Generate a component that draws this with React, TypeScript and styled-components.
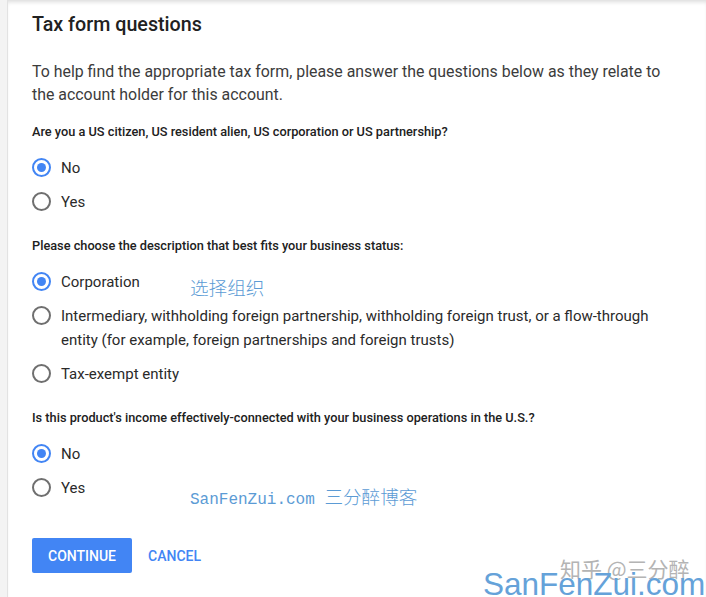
import styled, { createGlobalStyle } from "styled-components";

const GlobalStyle = createGlobalStyle`
    html, body {
        margin: 0;
        padding: 0;
        background: #ffffff;
    }
    body {
        font-family: Roboto, "Noto Sans", "Liberation Sans", sans-serif;
        color: #212121;
    }
`

const StyledPage = styled.div`
    position: relative;
    display: flex;
    width: 706px;
    height: 597px;
    overflow: hidden;
    background: #ffffff;
`

const SideStrip = styled.div`
    width: 7px;
    flex: none;
    background: #f3f3f3;
    border-right: 1px solid #e2e2e2;
`

const Card = styled.main`
    flex: 1;
    padding: 11px 0 0 24px;
    box-shadow: inset 0 4px 4px -2px rgba(0, 0, 0, 0.14);
`

const Title = styled.h2`
    margin: 0 0 21px 0;
    font-size: 19.7px;
    line-height: 28px;
    font-weight: 500;
    color: #212121;
`

const Intro = styled.p`
    margin: 0 0 17px 0;
    font-size: 15.9px;
    line-height: 23px;
    color: #3c3c3c;
    max-width: 650px;
`

const Question = styled.p`
    margin: 0 0 10px 0;
    font-size: 12.75px;
    line-height: 18px;
    font-weight: 500;
    color: #212121;
`

const Group = styled.div`
    display: flex;
    flex-direction: column;
    margin-bottom: 18px;
`

const Row = styled.label`
    display: flex;
    align-items: flex-start;
    gap: 10px;
    padding: 5px 0;
`

const Circle = styled.span<{ $checked?: boolean }>`
    position: relative;
    flex: none;
    box-sizing: border-box;
    width: 19px;
    height: 19px;
    margin-top: 2px;
    border-radius: 50%;
    border: 2px solid ${(p) => (p.$checked ? "#4285f4" : "#6f6f6f")};

    &::after {
        content: "";
        display: ${(p) => (p.$checked ? "block" : "none")};
        position: absolute;
        left: 3px;
        top: 3px;
        width: 9px;
        height: 9px;
        border-radius: 50%;
        background: #4285f4;
    }
`

const Label = styled.span`
    font-size: 15px;
    line-height: 24px;
    color: #2a2a2a;
    max-width: 600px;
`

const Actions = styled.div`
    display: flex;
    align-items: center;
    margin-top: 33px;
`

const Button = styled.button<{ $primary?: boolean }>`
    height: 35px;
    padding: 0 16px;
    border: none;
    border-radius: 2px;
    font-family: Roboto, "Liberation Sans", sans-serif;
    font-size: 14px;
    font-weight: 500;
    background: ${(p) => (p.$primary ? "#4285f4" : "transparent")};
    color: ${(p) => (p.$primary ? "#ffffff" : "#4285f4")};
`

const Mark = styled.div<{ $x: number; $y: number }>`
    position: absolute;
    left: ${(p) => p.$x}px;
    top: ${(p) => p.$y}px;
    color: #5b9bd5;
    white-space: nowrap;
`

const MarkCjk = styled(Mark)`
    font-family: "Noto Sans CJK SC", sans-serif;
    font-size: 18.6px;
    font-weight: 300;
    line-height: 22px;
`

const MarkMono = styled(Mark)`
    font-family: "Liberation Mono", monospace;
    font-size: 16px;
    line-height: 22px;

    span {
        font-family: "Noto Sans CJK SC", sans-serif;
        font-size: 18.6px;
        font-weight: 300;
    }
`

const MarkZhihu = styled(Mark)`
    font-family: "Noto Sans CJK SC", sans-serif;
    font-size: 21px;
    line-height: 26px;
    color: #b4b4b4;
    text-shadow: 0 0 2px #ffffff;
`

const MarkBig = styled(Mark)`
    font-family: "Liberation Sans", Arial, sans-serif;
    font-size: 31.5px;
    line-height: 32px;
    color: #65a2d9;
`

type Option = { text: string; checked?: boolean }

const groups: { question: string; options: Option[] }[] = [
    {
        question: "Are you a US citizen, US resident alien, US corporation or US partnership?",
        options: [{ text: "No", checked: true }, { text: "Yes" }],
    },
    {
        question: "Please choose the description that best fits your business status:",
        options: [
            { text: "Corporation", checked: true },
            { text: "Intermediary, withholding foreign partnership, withholding foreign trust, or a flow-through entity (for example, foreign partnerships and foreign trusts)" },
            { text: "Tax-exempt entity" },
        ],
    },
    {
        question: "Is this product's income effectively-connected with your business operations in the U.S.?",
        options: [{ text: "No", checked: true }, { text: "Yes" }],
    },
]

function App() {
    return (
        <StyledPage>
            <GlobalStyle />
            <SideStrip />
            <Card>
                <Title>Tax form questions</Title>
                <Intro>
                    To help find the appropriate tax form, please answer the questions below as they relate to the account holder for this account.
                </Intro>

                {groups.map((group) => (
                    <div key={group.question}>
                        <Question>{group.question}</Question>
                        <Group>
                            {group.options.map((option) => (
                                <Row key={option.text}>
                                    <Circle $checked={option.checked} />
                                    <Label>{option.text}</Label>
                                </Row>
                            ))}
                        </Group>
                    </div>
                ))}

                <Actions>
                    <Button $primary>CONTINUE</Button>
                    <Button>CANCEL</Button>
                </Actions>
            </Card>

            <MarkCjk $x={190} $y={276}>选择组织</MarkCjk>
            <MarkMono $x={190} $y={485}>SanFenZui.com <span>三分醉博客</span></MarkMono>
            <MarkZhihu $x={560} $y={555}>知乎 @三分醉</MarkZhihu>
            <MarkBig $x={483} $y={568}>SanFenZui.com</MarkBig>
        </StyledPage>
    )
}

export default App
